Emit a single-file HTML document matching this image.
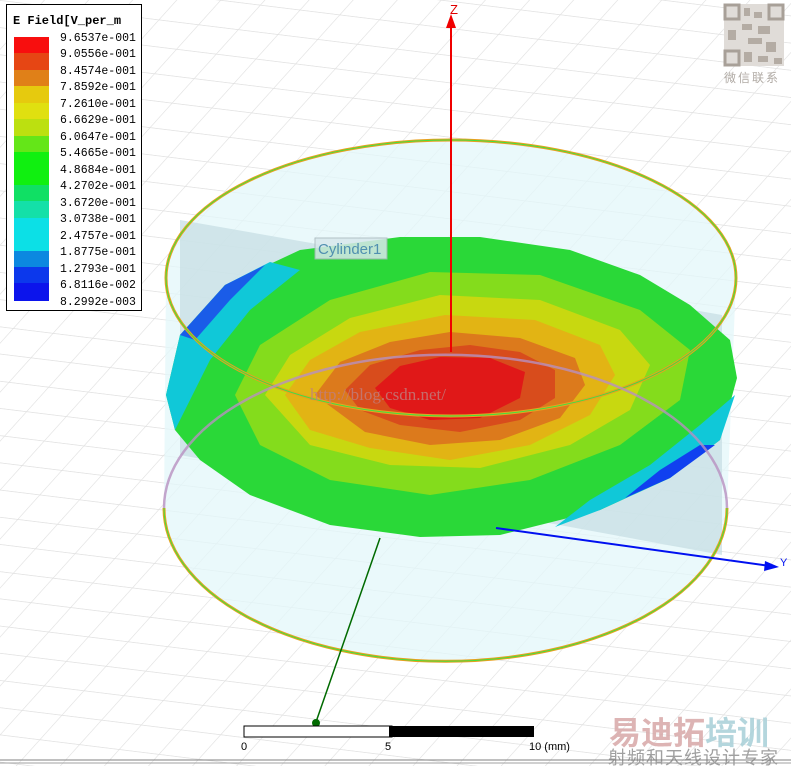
<!DOCTYPE html>
<html><head><meta charset="utf-8"><style>
html,body{margin:0;padding:0;background:#fff;}
svg{display:block}
</style></head><body>
<svg width="791" height="766" viewBox="0 0 791 766" xmlns="http://www.w3.org/2000/svg" font-family="Liberation Sans, sans-serif">
<defs>
<pattern id="g" width="40" height="27" patternUnits="userSpaceOnUse" patternTransform="rotate(7) skewX(-35)">
<path d="M0 0H40M0 0V27" stroke="#e0e0e0" stroke-width="1.5" fill="none"/>
</pattern>
</defs>
<rect width="791" height="766" fill="#fff"/>
<rect width="791" height="766" fill="url(#g)"/>
<!-- cylinder body -->
<path d="M166 278 L164 508 A281 153 0 0 0 727 508 L736 278 A285 138 0 0 0 166 278Z" fill="#e3f7f9" opacity="0.75"/>
<!-- vertical plane -->
<polygon points="180,220 722,315 722,555 180,455" fill="#c5dde2" opacity="0.7"/>
<!-- field surface -->
<g>
<polygon points="166,395 180,335 225,285 300,250 400,237 480,237 570,250 640,275 690,305 730,340 737,378 720,440 670,478 600,510 500,535 420,537 330,525 250,495 200,460 175,430" fill="#2ad838"/>
<polygon points="166,395 180,335 225,285 270,262 300,270 250,310 210,360 185,410 175,430" fill="#10c8d8"/>
<polygon points="180,335 225,285 265,265 230,300 195,340" fill="#1a5ce8"/>
<polygon points="735,395 720,440 670,478 600,510 555,527 590,500 650,465 700,425" fill="#10c8d8"/>
<polygon points="715,445 670,478 625,498 660,470 700,445" fill="#1040f0"/>
<polygon points="235,395 260,345 330,300 430,272 540,275 640,310 690,350 680,400 620,445 530,480 430,495 330,480 260,445" fill="#84dc1c"/>
<polygon points="265,395 290,355 350,318 440,295 540,300 620,330 650,365 630,410 570,445 480,468 390,465 310,445" fill="#c8d810"/>
<polygon points="285,395 310,360 360,332 445,315 535,320 600,345 615,375 590,415 530,445 450,460 370,448 310,430" fill="#e2b414"/>
<polygon points="315,395 340,362 390,342 450,332 520,338 575,358 585,385 560,418 500,440 430,445 365,432" fill="#dc7a1c"/>
<polygon points="345,390 370,365 420,350 470,345 520,352 555,370 555,398 520,420 460,432 400,425 360,410" fill="#d84c1c"/>
<polygon points="375,388 400,366 440,357 490,358 525,372 520,398 480,418 430,420 390,408" fill="#e01818"/>
</g>
<!-- top ellipse -->
<ellipse cx="451" cy="278" rx="285" ry="138" fill="none" stroke="#e8a020" stroke-width="3"/>
<ellipse cx="451" cy="278" rx="285" ry="138" fill="none" stroke="#40e040" stroke-width="1"/>
<!-- bottom ellipse -->
<path d="M164 508 A281 153 0 0 1 727 508" fill="none" stroke="#b890c0" stroke-width="2.5" opacity="0.8"/>
<path d="M164 508 A281 153 0 0 0 727 508" fill="none" stroke="#e8a020" stroke-width="3"/>
<path d="M164 508 A281 153 0 0 0 727 508" fill="none" stroke="#40e040" stroke-width="1"/>
<!-- axes -->
<line x1="451" y1="352" x2="451" y2="24" stroke="#f00000" stroke-width="2"/>
<polygon points="451,14 446,28 456,28" fill="#f00000"/>
<text x="450" y="14" font-size="13" fill="#e00000">Z</text>
<line x1="496" y1="528" x2="770" y2="566" stroke="#0010f0" stroke-width="2"/>
<polygon points="779,567 765,561 764,571" fill="#0010f0"/>
<text x="780" y="566" font-size="11" fill="#0010f0">Y</text>
<line x1="380" y1="538" x2="316" y2="722" stroke="#006a00" stroke-width="1.5"/>
<circle cx="316" cy="723" r="4" fill="#006a00"/>
<!-- cylinder label -->
<rect x="315" y="238" width="72" height="21" fill="#d8e8ec" stroke="#a8b8bc" opacity="0.85"/>
<text x="318" y="254" font-size="15" fill="#5090b0">Cylinder1</text>
<text x="310" y="400" font-size="17" font-family="Liberation Serif, serif" fill="#c08080" opacity="0.8">http://blog.csdn.net/</text>
<!-- legend -->
<rect x="6.5" y="4.5" width="135" height="306" fill="#fff" stroke="#000"/>
<text x="13" y="24" font-size="12" font-family="Liberation Mono, monospace" font-weight="bold" fill="#000">E Field[V_per_m</text>
<g>
<rect x="14" y="37" width="35" height="17" fill="#f80e0e"/>
<rect x="14" y="53" width="35" height="17" fill="#e64614"/>
<rect x="14" y="70" width="35" height="17" fill="#e08018"/>
<rect x="14" y="86" width="35" height="17" fill="#e6ca0e"/>
<rect x="14" y="103" width="35" height="17" fill="#e0e010"/>
<rect x="14" y="119" width="35" height="17" fill="#bce010"/>
<rect x="14" y="136" width="35" height="17" fill="#64e618"/>
<rect x="14" y="152" width="35" height="34" fill="#10f010"/>
<rect x="14" y="185" width="35" height="17" fill="#10e064"/>
<rect x="14" y="201" width="35" height="17" fill="#14e0a8"/>
<rect x="14" y="218" width="35" height="33" fill="#0ce0e6"/>
<rect x="14" y="251" width="35" height="17" fill="#0c88e0"/>
<rect x="14" y="267" width="35" height="17" fill="#0c38ec"/>
<rect x="14" y="283" width="35" height="18" fill="#0c14ec"/>
</g>
<g font-size="11.5" font-family="Liberation Mono, monospace" fill="#000">
<text x="60" y="41">9.6537e-001</text>
<text x="60" y="57">9.0556e-001</text>
<text x="60" y="74">8.4574e-001</text>
<text x="60" y="90">7.8592e-001</text>
<text x="60" y="107">7.2610e-001</text>
<text x="60" y="123">6.6629e-001</text>
<text x="60" y="140">6.0647e-001</text>
<text x="60" y="156">5.4665e-001</text>
<text x="60" y="173">4.8684e-001</text>
<text x="60" y="189">4.2702e-001</text>
<text x="60" y="206">3.6720e-001</text>
<text x="60" y="222">3.0738e-001</text>
<text x="60" y="239">2.4757e-001</text>
<text x="60" y="255">1.8775e-001</text>
<text x="60" y="272">1.2793e-001</text>
<text x="60" y="288">6.8116e-002</text>
<text x="60" y="305">8.2992e-003</text>
</g>
<!-- QR -->
<g fill="#b4aca4">
<rect x="724" y="4" width="60" height="62" fill="#e0dcd8"/>
<rect x="725" y="5" width="14" height="14" fill="none" stroke="#a8a098" stroke-width="3"/>
<rect x="769" y="5" width="14" height="14" fill="none" stroke="#a8a098" stroke-width="3"/>
<rect x="725" y="51" width="14" height="14" fill="none" stroke="#a8a098" stroke-width="3"/>
<rect x="744" y="8" width="6" height="8"/><rect x="754" y="12" width="8" height="6"/>
<rect x="742" y="24" width="10" height="6"/><rect x="758" y="26" width="12" height="8"/>
<rect x="728" y="30" width="8" height="10"/><rect x="748" y="38" width="14" height="6"/>
<rect x="766" y="42" width="10" height="10"/><rect x="744" y="52" width="8" height="10"/>
<rect x="758" y="56" width="10" height="6"/><rect x="774" y="58" width="8" height="6"/>
</g>
<text x="724" y="82" font-size="12" fill="#b0aaa4" font-family="Liberation Sans, Noto Sans CJK SC, sans-serif" letter-spacing="2">微信联系</text>
<!-- scale bar -->
<rect x="244" y="726" width="148" height="11" fill="#fff" stroke="#000"/>
<rect x="389" y="726" width="145" height="11" fill="#000"/>
<g font-size="11" fill="#000">
<text x="241" y="750">0</text><text x="385" y="750">5</text><text x="529" y="750">10 (mm)</text>
</g>
<!-- bottom watermark -->
<text x="609" y="744" font-size="32" font-weight="bold" fill="#d8a8a8" font-family="Liberation Sans, Noto Sans CJK SC, sans-serif" opacity="0.85">易迪拓<tspan fill="#a8d0d8">培训</tspan></text>
<text x="608" y="764" font-size="18" fill="#a0a0a0" font-family="Liberation Sans, Noto Sans CJK SC, sans-serif" letter-spacing="1">射频和天线设计专家</text>
<line x1="0" y1="760" x2="791" y2="760" stroke="#808080"/>
<line x1="0" y1="763" x2="791" y2="763" stroke="#a0a0a0"/>
</svg>
</body></html>
